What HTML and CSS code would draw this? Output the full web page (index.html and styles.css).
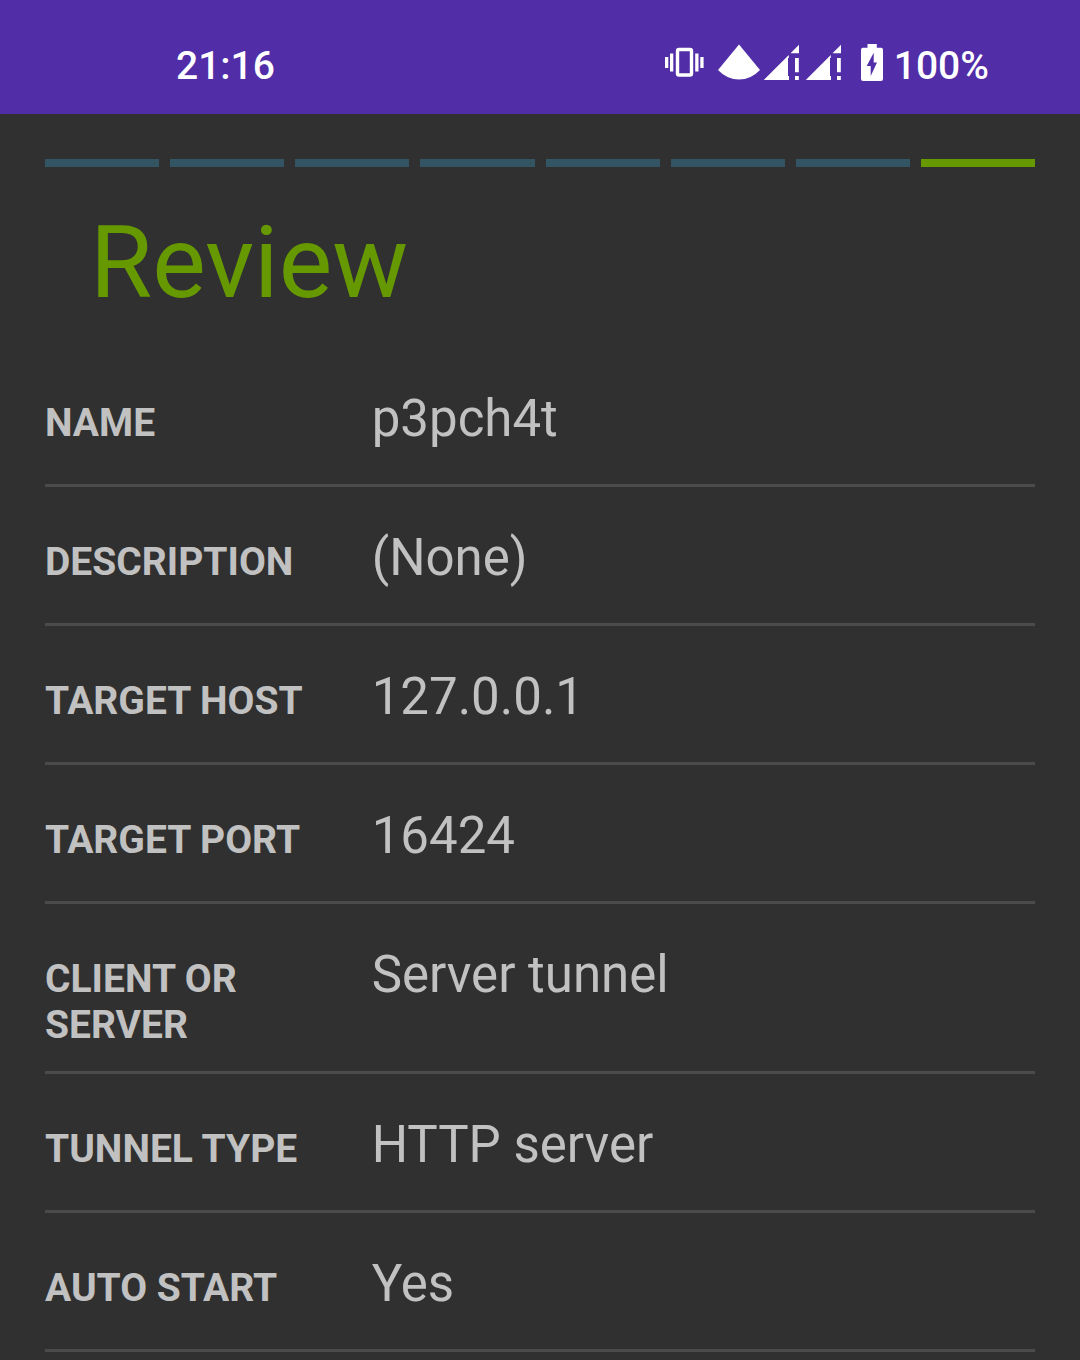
FILE: index.html
```html
<!DOCTYPE html>
<html lang="en">
<head>
<meta charset="utf-8">
<meta name="viewport" content="width=device-width, initial-scale=1">
<title>Review</title>
<link rel="stylesheet" href="styles.css">
</head>
<body>
<header class="status-bar">
  <time class="clock">21:16</time>
  <div class="status-icons">
    <svg class="icon vibrate" viewBox="664 43 40 46" aria-hidden="true">
      <rect x="677.5" y="49.5" width="14" height="25.5" rx="1.5" fill="none" stroke="#fff" stroke-width="3.4"/>
      <path fill="#fff" d="M665 57h3.3v11H665zM670 53.5h3.3v18H670zM695.2 53.5h3.3v18h-3.3zM700.3 57h3.3v11h-3.3z"/>
    </svg>
    <div class="network">
      <svg class="icon wifi" viewBox="718 43 42 46" aria-hidden="true">
        <path fill="#fff" d="M739 44.5L760 70Q751 79.5 739 79.5T718 70z"/>
      </svg>
      <svg class="icon signal" viewBox="764 43 38 46" aria-hidden="true">
        <path fill="#fff" d="M763.7 80L788.8 55V58H788V76H789V80zM790.5 53.3L799 44.8V53.3zM795 58h3.8v14.3H795zM795 76h3.8v4H795z"/>
      </svg>
      <svg class="icon signal" viewBox="764 43 38 46" aria-hidden="true">
        <path fill="#fff" d="M763.7 80L788.8 55V58H788V76H789V80zM790.5 53.3L799 44.8V53.3zM795 58h3.8v14.3H795zM795 76h3.8v4H795z"/>
      </svg>
    </div>
    <div class="battery">
      <svg class="icon cell" viewBox="861 43 22 46" aria-hidden="true">
        <path fill="#fff" fill-rule="evenodd" d="M867.5 44h9.3v3.7h4.2a2 2 0 0 1 2 2V79a2 2 0 0 1-2 2H863a2 2 0 0 1-2-2V49.7a2 2 0 0 1 2-2h4.5zM873.7 52.7L866.7 66H870.7V76L877 62.5H873.7z"/>
      </svg>
      <span>100%</span>
    </div>
  </div>
</header>
<main class="wizard">
  <ol class="steps" aria-label="Step 8 of 8">
    <li class="step"></li>
    <li class="step"></li>
    <li class="step"></li>
    <li class="step"></li>
    <li class="step"></li>
    <li class="step"></li>
    <li class="step"></li>
    <li class="step current" aria-current="step"></li>
  </ol>
  <h1 class="title">Review</h1>
  <dl class="summary">
    <div class="row"><dt class="label">NAME</dt><dd class="value">p3pch4t</dd></div>
    <div class="row"><dt class="label">DESCRIPTION</dt><dd class="value">(None)</dd></div>
    <div class="row"><dt class="label">TARGET HOST</dt><dd class="value">127.0.0.1</dd></div>
    <div class="row"><dt class="label">TARGET PORT</dt><dd class="value">16424</dd></div>
    <div class="row"><dt class="label">CLIENT OR SERVER</dt><dd class="value">Server tunnel</dd></div>
    <div class="row"><dt class="label">TUNNEL TYPE</dt><dd class="value">HTTP server</dd></div>
    <div class="row"><dt class="label">AUTO START</dt><dd class="value">Yes</dd></div>
  </dl>
</main>
</body>
</html>
```
FILE: styles.css
```css
* {
  box-sizing: border-box;
}

body {
  margin: 0;
  min-height: 100vh;
  background: #303030;
  color: #c1c1c1;
  font-family: Roboto, "Liberation Sans", sans-serif;
}

.status-bar {
  display: flex;
  justify-content: space-between;
  padding: 43px 91px 25px 176px;
  background: #512da8;
  color: #fff;
  font-size: 39px;
  font-weight: 500;
  line-height: 46px;
}

.status-icons {
  display: flex;
  gap: 14px;
}

.network {
  display: flex;
  gap: 4px;
}

.battery {
  display: flex;
  gap: 11px;
  padding-left: 3px;
}

.icon {
  display: block;
  height: 46px;
}

.vibrate {
  width: 40px;
}

.wifi {
  width: 42px;
}

.signal {
  width: 38px;
}

.cell {
  width: 22px;
}

.wizard {
  padding: 45px 45px 8px;
}

.steps {
  display: flex;
  gap: 11px;
  margin: 0;
  padding: 0;
  list-style: none;
}

.step {
  flex: 1;
  height: 8px;
  background: #335563;
}

.current {
  background: #669900;
}

.title {
  margin: 37px 0 26px;
  padding: 0 45px;
  color: #669900;
  font-size: 101px;
  font-weight: 400;
  line-height: 118px;
}

.summary {
  margin: 0;
}

.row {
  display: flex;
  align-items: flex-start;
  min-height: 139px;
  padding-bottom: 23px;
  border-bottom: 3px solid #4b4b4b;
}

.label {
  flex: 0 0 33%;
  margin-top: 52px;
  font-size: 39px;
  font-weight: 700;
  line-height: 46px;
}

.value {
  flex: 1;
  margin: 41px 0 0;
  font-size: 51px;
  line-height: 60px;
}
```
